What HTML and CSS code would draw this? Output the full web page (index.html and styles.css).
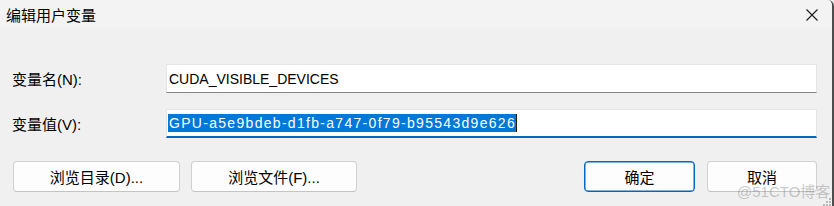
FILE: index.html
```html
<!DOCTYPE html>
<html lang="zh-CN">
<head>
<meta charset="utf-8">
<title>编辑用户变量</title>
<link rel="stylesheet" href="styles.css">
</head>
<body>
<div class="window">
  <div class="titlebar">
    <span class="title">编辑用户变量</span>
    <span class="close">
      <svg width="12" height="12" viewBox="0 0 12 12"><path d="M0.5 0.5 L11.5 11.5 M11.5 0.5 L0.5 11.5" stroke="#1a1a1a" stroke-width="1.1" fill="none"/></svg>
    </span>
  </div>
  <div class="content">
    <div class="form">
      <span class="label">变量名(N):</span>
      <div class="field">CUDA_VISIBLE_DEVICES</div>
      <span class="label">变量值(V):</span>
      <div class="field focused"><span class="sel">GPU-a5e9bdeb-d1fb-a747-0f79-b95543d9e626</span><span class="caret"></span></div>
    </div>
    <div class="actions">
      <div class="group">
        <button class="btn wide">浏览目录(D)...</button>
        <button class="btn wide2">浏览文件(F)...</button>
      </div>
      <div class="group right">
        <button class="btn primary">确定</button>
        <button class="btn cancel">取消</button>
      </div>
    </div>
  </div>
  <span class="watermark">@51CTO博客</span>
  <svg class="grip" width="10" height="8" viewBox="0 0 10 8">
    <rect x="7" y="0" width="2" height="2" fill="#b8b8b8"/>
    <rect x="4" y="3" width="2" height="2" fill="#b8b8b8"/>
    <rect x="7" y="3" width="2" height="2" fill="#b8b8b8"/>
    <rect x="1" y="6" width="2" height="2" fill="#b8b8b8"/>
    <rect x="4" y="6" width="2" height="2" fill="#b8b8b8"/>
    <rect x="7" y="6" width="2" height="2" fill="#b8b8b8"/>
  </svg>
</div>
</body>
</html>
```
FILE: styles.css
```css
html, body {
  margin: 0;
  padding: 0;
  background: #f0f0f0;
}

body {
  font-family: "Liberation Sans", "Noto Sans CJK SC", sans-serif;
  color: #000;
}

.window {
  position: relative;
  width: 832px;
  height: 206px;
  background: #f0f0f0;
  border-right: 2px solid #4d4d4d;
  border-top-right-radius: 6px;
  overflow: hidden;
}

.titlebar {
  height: 30px;
  display: flex;
  align-items: center;
  justify-content: space-between;
  padding: 0 14px 0 6px;
  background: linear-gradient(#f3f3f3 0, #f3f3f3 24px, #f0f0f0 34px);
  font-size: 15px;
}

.title {
  line-height: 15px;
}

.close {
  display: flex;
  width: 12px;
  height: 12px;
}

.content {
  padding: 34px 15px 0 12px;
}

.form {
  display: grid;
  grid-template-columns: 154px 1fr;
  row-gap: 16px;
  align-items: center;
}

.label {
  font-size: 15px;
  line-height: 15px;
  padding-top: 2px;
}

.field {
  box-sizing: border-box;
  height: 29px;
  display: flex;
  align-items: center;
  background: #fff;
  border: 1px solid #e5e5e5;
  border-bottom: 1px solid #868686;
  padding-left: 2px;
  font-size: 14px;
  line-height: 18px;
}

.field.focused {
  border-bottom: 2px solid #0067c0;
  padding-left: 1px;
  padding-bottom: 1px;
}

.sel {
  background: #0078d7;
  color: #fff;
  line-height: 18px;
  letter-spacing: 1.3px;
  padding-left: 1px;
}

.caret {
  width: 1px;
  height: 18px;
  background: #1a1a1a;
}

.actions {
  margin-top: 23px;
  display: flex;
  justify-content: space-between;
  padding-left: 1px;
}

.group {
  display: flex;
  gap: 11px;
}

.group.right {
  gap: 12px;
}

.btn {
  box-sizing: border-box;
  height: 31px;
  padding: 0;
  font-family: inherit;
  font-size: 15px;
  color: #000;
  background: #fdfdfd;
  border: 1px solid #d0d0d0;
  border-bottom-color: #c4c4c4;
  border-radius: 4px;
}

.btn.wide { width: 167px; }
.btn.wide2 { width: 166px; }
.btn.primary {
  width: 111px;
  border: 1px solid #0067c0;
  box-shadow: inset 0 0 0 0.5px #0067c0;
}
.btn.cancel { width: 110px; }

.watermark {
  position: absolute;
  left: 737px;
  top: 180px;
  font-size: 15px;
  color: rgba(120, 120, 120, 0.4);
  white-space: nowrap;
}

.grip {
  position: absolute;
  right: 0;
  bottom: 0;
}
```
